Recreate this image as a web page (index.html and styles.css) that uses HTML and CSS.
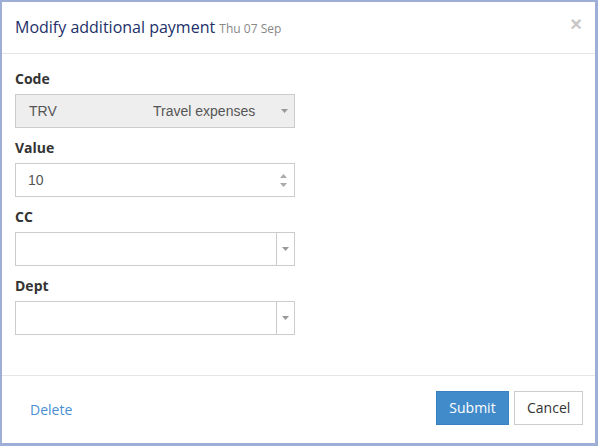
FILE: index.html
```html
<!DOCTYPE html>
<html>
<head>
<meta charset="utf-8">
<link rel="stylesheet" href="styles.css">
</head>
<body>
<div class="dialog">
  <div class="header">
    <div class="title">Modify additional payment <span class="date">Thu 07 Sep</span></div>
    <span class="close">&times;</span>
  </div>
  <div class="body">
    <div class="group">
      <div class="label">Code</div>
      <div class="box disabled">
        <span class="code">TRV</span>
        <span class="desc">Travel expenses</span>
        <svg class="caret" width="7" height="4" viewBox="0 0 7 4"><path d="M0 0h7L3.5 4z" fill="#999"/></svg>
      </div>
    </div>
    <div class="group">
      <div class="label">Value</div>
      <div class="box">
        <span class="val">10</span>
        <svg class="spin" width="7" height="13" viewBox="0 0 7 13"><path d="M0 4L3.5 0 7 4z" fill="#aaa"/><path d="M0 9h7L3.5 13z" fill="#aaa"/></svg>
      </div>
    </div>
    <div class="group">
      <div class="label">CC</div>
      <div class="box select">
        <span class="fill"></span>
        <span class="btn-drop"><svg width="7" height="4" viewBox="0 0 7 4"><path d="M0 0h7L3.5 4z" fill="#999"/></svg></span>
      </div>
    </div>
    <div class="group">
      <div class="label">Dept</div>
      <div class="box select">
        <span class="fill"></span>
        <span class="btn-drop"><svg width="7" height="4" viewBox="0 0 7 4"><path d="M0 0h7L3.5 4z" fill="#999"/></svg></span>
      </div>
    </div>
  </div>
  <div class="footer">
    <button class="btn link">Delete</button>
    <span class="spacer"></span>
    <button class="btn primary">Submit</button>
    <button class="btn default">Cancel</button>
  </div>
</div>
</body>
</html>
```
FILE: styles.css
```css
html, body {
  margin: 0;
  padding: 0;
  background: #fff;
}
.dialog {
  width: 598px;
  height: 446px;
  box-sizing: border-box;
  border: 2px solid #9dafd6;
  border-right-width: 3px;
  border-bottom-width: 3px;
  display: flex;
  flex-direction: column;
  font-family: "Open Sans", sans-serif;
  background: #fff;
}
.header {
  height: 51px;
  border-bottom: 1px solid #e5e5e5;
  display: flex;
  align-items: center;
  padding: 0 13px 0 13px;
}
.title {
  font-size: 16px;
  line-height: 22px;
  color: #22306a;
}
.date {
  font-size: 12px;
  color: #888;
}
.close {
  margin-left: auto;
  font-family: "Liberation Sans", Arial, sans-serif;
  font-weight: bold;
  font-size: 20px;
  line-height: 20px;
  color: #c6c6c6;
  margin-top: -7px;
}
.body {
  flex: 1;
  padding: 15px 13px 0 13px;
}
.group {
  margin-bottom: 10px;
}
.label {
  font-weight: bold;
  font-size: 14px;
  line-height: 20px;
  color: #333;
  margin-bottom: 5px;
}
.box {
  width: 280px;
  height: 34px;
  box-sizing: border-box;
  border: 1px solid #ccc;
  display: flex;
  align-items: center;
  font-family: "Liberation Sans", Arial, sans-serif;
  font-size: 14px;
  color: #555;
  background: #fff;
}
.box.disabled {
  background: #eee;
}
.code {
  padding-left: 13px;
  width: 124px;
}
.desc {
  flex: 1;
}
.caret {
  margin-right: 6px;
}
.val {
  flex: 1;
  padding-left: 12px;
}
.spin {
  margin-right: 7px;
}
.select .fill {
  flex: 1;
  align-self: stretch;
}
.btn-drop {
  width: 17px;
  align-self: stretch;
  border-left: 1px solid #ccc;
  display: flex;
  align-items: center;
  justify-content: center;
}
.footer {
  border-top: 1px solid #e5e5e5;
  padding: 15px 12px 18px 15px;
  display: flex;
  align-items: center;
}
.spacer {
  flex: 1;
}
.btn {
  font-family: "Open Sans", sans-serif;
  font-size: 14px;
  height: 34px;
  box-sizing: border-box;
  padding: 0 12px;
  border: 1px solid transparent;
  background: none;
  line-height: 20px;
  cursor: pointer;
}
.btn.link {
  color: #4a8fd6;
  border-color: transparent;
  padding-top: 4px;
}
.btn.primary {
  background: #418bca;
  border-color: #3a80bf;
  color: #fff;
  width: 73px;
}
.btn.default {
  background: #fff;
  border-color: #ccc;
  color: #333;
  margin-left: 5px;
  width: 69px;
}
```
